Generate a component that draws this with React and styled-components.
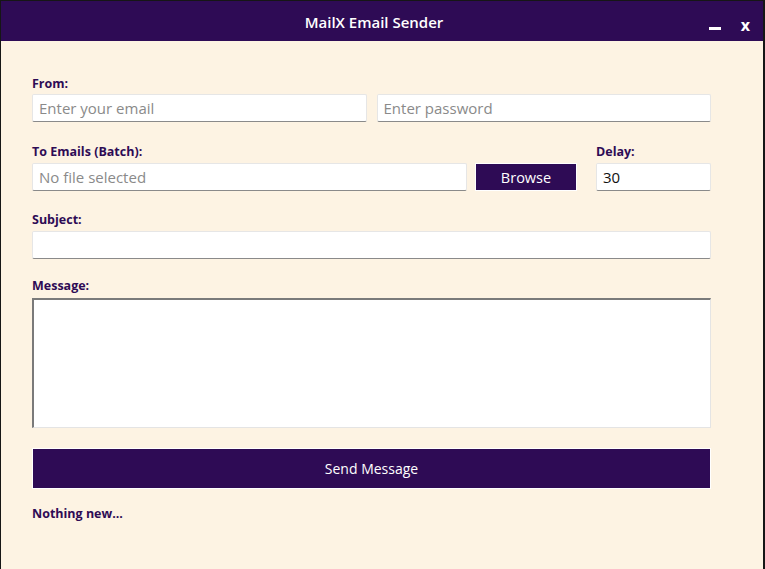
import React from 'react';
import styled, { createGlobalStyle } from 'styled-components';

const purple = '#2e0b55';
const cream = '#fdf3e3';

const GlobalStyle = createGlobalStyle`
  html, body {
    margin: 0;
    padding: 0;
    background: #161616;
  }
  * { box-sizing: border-box; }
`;

const Window = styled.div`
  width: 765px;
  height: 569px;
  border-top: 1px solid #161616;
  border-left: 1px solid #161616;
  border-right: 2px solid #161616;
  background: ${cream};
  display: flex;
  flex-direction: column;
  font-family: "Open Sans", "Noto Sans", sans-serif;
`;

const TitleBar = styled.div`
  height: 40px;
  flex: none;
  background: ${purple};
  display: grid;
  grid-template-columns: 1fr auto 1fr;
  align-items: center;
  color: #fff;
`;

const Title = styled.div`
  font-size: 15px;
  font-weight: 600;
  padding-right: 16px;
  padding-top: 1px;
`;

const Controls = styled.div`
  justify-self: end;
  display: flex;
  align-items: center;
  gap: 20px;
  padding-right: 13px;
  padding-top: 8px;
`;

const MinBar = styled.span`
  display: block;
  width: 12px;
  height: 3px;
  background: #fff;
  margin-top: 6px;
`;

const CloseX = styled.span`
  font-size: 16px;
  font-weight: 700;
  line-height: 1;
`;

const Form = styled.div`
  width: 679px;
  margin-left: 31px;
  padding-top: 35px;
  display: flex;
  flex-direction: column;
`;

const Field = styled.div`
  display: flex;
  flex-direction: column;
  gap: ${p => p.$gap ?? 3}px;
  margin-top: ${p => p.$top ?? 0}px;
  flex: ${p => p.$grow ? '1 1 auto' : 'none'};
  width: ${p => p.$width ? `${p.$width}px` : 'auto'};
`;

const Label = styled.label`
  font-size: 12.5px;
  font-weight: 700;
  line-height: 16px;
  color: ${purple};
`;

const Row = styled.div`
  display: flex;
  gap: ${p => p.$gap ?? 10}px;
  align-items: ${p => p.$align ?? 'stretch'};
  margin-top: ${p => p.$top ?? 0}px;
`;

const Input = styled.input`
  flex: 1 1 auto;
  min-width: 0;
  width: 100%;
  height: 28px;
  background: #fff;
  border: 1px solid #e6e6e6;
  border-bottom: 1px solid #8a8a8a;
  border-radius: 2px;
  padding: 0 6px;
  font-family: inherit;
  font-size: 15px;
  color: #111;
  outline: none;
  &::placeholder { color: #8a8a8a; }
`;

const Browse = styled.button`
  width: 102px;
  height: 28px;
  flex: none;
  border: 1px solid #fff;
  background: ${purple};
  color: #fff;
  font-family: inherit;
  font-size: 14.5px;
  padding: 0;
`;

const MessageBox = styled.textarea`
  display: block;
  width: 100%;
  height: 130px;
  resize: none;
  background: #fff;
  border: 2px solid;
  border-color: #7a7a7a #e4e4e4 #e4e4e4 #7a7a7a;
  border-right-width: 1px;
  border-bottom-width: 1px;
  outline: none;
  font-family: inherit;
  font-size: 14px;
`;

const SendButton = styled.button`
  margin-top: 20px;
  height: 41px;
  width: 100%;
  border: 1px solid #fff;
  background: ${purple};
  color: #fff;
  font-family: inherit;
  font-size: 14px;
`;

const Status = styled.div`
  margin-top: 17px;
  font-size: 12.5px;
  font-weight: 700;
  line-height: 16px;
  color: ${purple};
`;

export default function App() {
  return (
    <>
      <GlobalStyle />
      <Window>
        <TitleBar>
          <span />
          <Title>MailX Email Sender</Title>
          <Controls>
            <MinBar />
            <CloseX>x</CloseX>
          </Controls>
        </TitleBar>
        <Form>
          <Field $gap={2}>
            <Label>From:</Label>
            <Row>
              <Input placeholder="Enter your email" />
              <Input placeholder="Enter password" type="password" />
            </Row>
          </Field>

          <Row $top={22} $gap={19} $align="flex-end">
            <Field $grow>
              <Label>To Emails (Batch):</Label>
              <Row $gap={8} $align="center">
                <Input placeholder="No file selected" readOnly />
                <Browse>Browse</Browse>
              </Row>
            </Field>
            <Field $width={115}>
              <Label>Delay:</Label>
              <Input defaultValue="30" />
            </Field>
          </Row>

          <Field $top={21}>
            <Label>Subject:</Label>
            <Input />
          </Field>

          <Field $top={19} $gap={4}>
            <Label>Message:</Label>
            <MessageBox />
          </Field>

          <SendButton>Send Message</SendButton>
          <Status>Nothing new...</Status>
        </Form>
      </Window>
    </>
  );
}
